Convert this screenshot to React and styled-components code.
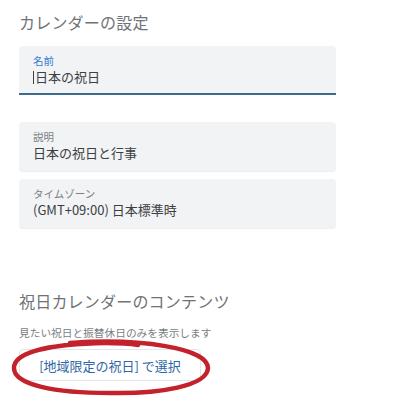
import styled, { createGlobalStyle } from "styled-components";

const GlobalStyle = createGlobalStyle`
  body {
    margin: 0;
    background: #ffffff;
    font-family: "Noto Sans CJK JP", "Noto Sans", sans-serif;
  }
`;

const Page = styled.div`
  width: 413px;
  height: 416px;
  padding-left: 19px;
  box-sizing: border-box;
  overflow: hidden;
`;

const SectionTitle = styled.h2`
  margin: ${({ top }) => top}px 0 0;
  font-size: 16px;
  line-height: 22px;
  font-weight: 400;
  color: #6f7377;
  letter-spacing: 0.2px;
`;

const Field = styled.div`
  width: 303px;
  height: ${({ focused }) => (focused ? 39 : 41)}px;
  margin-top: ${({ top }) => top}px;
  padding: 8px 0 0 14px;
  background: #f1f3f4;
  border-radius: ${({ focused }) => (focused ? "4px 4px 0 0" : "4px")};
  border-bottom: ${({ focused }) => (focused ? "2px solid #3e6a8e" : "1px solid #eceef0")};
`;

const Label = styled.div`
  font-size: 10.5px;
  line-height: 14px;
  color: ${({ focused }) => (focused ? "#3a7bd0" : "#7d8185")};
`;

const Value = styled.div`
  font-size: 13px;
  line-height: 18px;
  color: #3c4043;
`;

const Caret = styled.span`
  display: inline-block;
  width: 1px;
  height: 13px;
  margin-right: 1px;
  vertical-align: -2px;
  background: #3c4043;
`;

const Hint = styled.p`
  margin: 13px 0 0;
  font-size: 10.7px;
  line-height: 15px;
  color: #7a7e82;
`;

const ButtonWrap = styled.div`
  position: relative;
  width: 182px;
  margin-top: 9px;
`;

const SelectButton = styled.button`
  width: 182px;
  height: 32px;
  padding: 0;
  background: #ffffff;
  border: 1px solid #e3e6ea;
  border-radius: 4px;
  font-family: inherit;
  font-size: 13px;
  color: #2f67a6;
  cursor: pointer;
`;

// hand-drawn red ring marking the button
const Ring = styled.svg`
  position: absolute;
  left: -9px;
  top: -11px;
  pointer-events: none;
`;

const App = () => {
  return (
    <Page>
      <GlobalStyle />
      <SectionTitle top={11}>カレンダーの設定</SectionTitle>

      <Field focused top={13}>
        <Label focused>名前</Label>
        <Value>
          <Caret />
          日本の祝日
        </Value>
      </Field>

      <Field top={27}>
        <Label>説明</Label>
        <Value>日本の祝日と行事</Value>
      </Field>

      <Field top={7}>
        <Label>タイムゾーン</Label>
        <Value>(GMT+09:00) 日本標準時</Value>
      </Field>

      <SectionTitle top={61}>祝日カレンダーのコンテンツ</SectionTitle>
      <Hint>見たい祝日と振替休日のみを表示します</Hint>

      <ButtonWrap>
        <SelectButton>[地域限定の祝日] で選択</SelectButton>
        <Ring width="202" height="58" viewBox="0 0 202 58">
          <path
            d="M60 5 C 130 0, 198 10, 198 30 C 197 48, 150 56, 100 55 C 45 55, 4 47, 4 30 C 4 14, 40 6, 96 5 C 110 5, 122 6, 128 7"
            fill="none"
            stroke="#c3222c"
            strokeWidth="4.5"
            strokeLinecap="round"
          />
        </Ring>
      </ButtonWrap>
    </Page>
  );
};

export default App;
